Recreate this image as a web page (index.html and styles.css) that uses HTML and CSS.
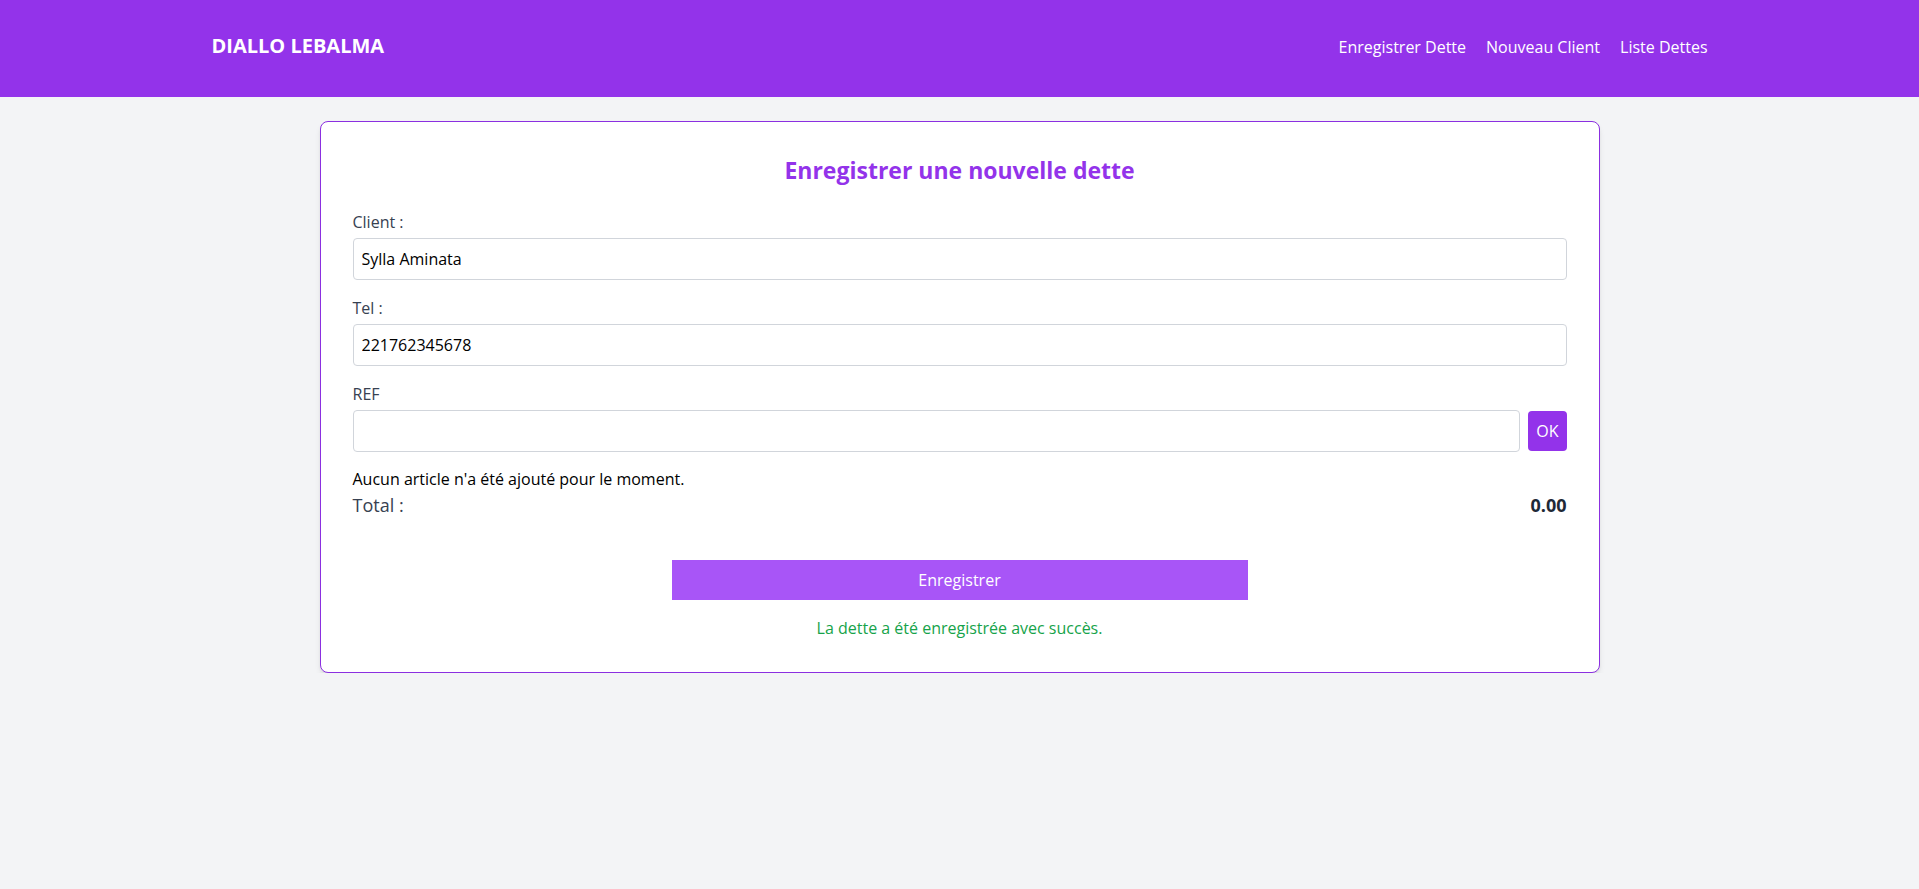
FILE: index.html
```html
<!DOCTYPE html>
<html lang="fr">
<head>
<meta charset="utf-8">
<title>Enregistrer une nouvelle dette</title>
<link rel="stylesheet" href="styles.css">
</head>
<body>
<header class="topbar">
  <div class="topbar-inner">
    <div class="brand">DIALLO LEBALMA</div>
    <nav class="nav">
      <a href="#" class="nav-link">Enregistrer Dette</a>
      <a href="#" class="nav-link">Nouveau Client</a>
      <a href="#" class="nav-link">Liste Dettes</a>
    </nav>
  </div>
</header>
<main class="card">
  <h2 class="card-title">Enregistrer une nouvelle dette</h2>
  <div class="field">
    <label class="label">Client :</label>
    <input class="input" type="text" value="Sylla Aminata">
  </div>
  <div class="field">
    <label class="label">Tel :</label>
    <input class="input" type="text" value="221762345678">
  </div>
  <div class="field field-ref">
    <label class="label">REF</label>
    <div class="ref-row">
      <input class="input ref-input" type="text" value="">
      <button class="ok-btn" type="button">OK</button>
    </div>
  </div>
  <p class="empty">Aucun article n'a été ajouté pour le moment.</p>
  <div class="total-row">
    <span class="total-label">Total :</span>
    <span class="total-value">0.00</span>
  </div>
  <button class="submit-btn" type="button">Enregistrer</button>
  <p class="success">La dette a été enregistrée avec succès.</p>
</main>
</body>
</html>
```
FILE: styles.css
```css
html, body {
  margin: 0;
  padding: 0;
}
body {
  background: #f3f4f6;
  font-family: "Open Sans", "Noto Sans", sans-serif;
  font-size: 16px;
  line-height: 24px;
  color: #000;
}
.topbar {
  background: #9333ea;
  height: 97px;
  box-sizing: border-box;
  padding-top: 32px;
}
.topbar-inner {
  box-sizing: border-box;
  max-width: 1536px;
  margin: 0 auto;
  padding: 0 20px;
  display: flex;
  align-items: center;
  justify-content: space-between;
  height: 28px;
}
.brand {
  color: #fff;
  font-weight: 700;
  font-size: 20px;
  line-height: 28px;
}
.nav {
  display: flex;
  gap: 20px;
  margin-top: 2px;
}
.nav-link {
  color: #fff;
  text-decoration: none;
  font-size: 16px;
  line-height: 24px;
}
.card {
  display: block;
  box-sizing: border-box;
  width: 1280px;
  margin: 24px auto 0;
  background: #fff;
  border: 1px solid #8b2fe0;
  border-radius: 8px;
  padding: 32px;
  box-shadow: 0 4px 6px -1px rgba(0,0,0,0.1), 0 2px 4px -2px rgba(0,0,0,0.1);
}
.card-title {
  margin: 0 0 24px;
  text-align: center;
  font-size: 23px;
  line-height: 32px;
  font-weight: 700;
  color: #9333ea;
}
.field {
  margin-bottom: 16px;
}
.field-ref {
  margin-bottom: 15px;
}
.label {
  display: block;
  color: #374151;
  font-size: 16px;
  line-height: 24px;
  margin-bottom: 4px;
}
.input {
  display: block;
  width: 100%;
  box-sizing: border-box;
  height: 42px;
  padding: 0 8px;
  border: 1px solid #d1d5db;
  border-radius: 4px;
  font-family: "Open Sans", "Noto Sans", sans-serif;
  font-size: 16px;
  color: #000;
  background: #fff;
  outline: none;
}
.ref-row {
  display: flex;
  align-items: center;
  gap: 8px;
}
.ref-input {
  flex: 1;
  width: auto;
}
.ok-btn {
  background: #9333ea;
  color: #fff;
  border: none;
  border-radius: 4px;
  padding: 8px;
  font-family: "Open Sans", "Noto Sans", sans-serif;
  font-size: 16px;
  line-height: 24px;
  height: 40px;
}
.empty {
  margin: 0;
  color: #000;
  font-size: 16px;
  line-height: 24px;
}
.total-row {
  display: flex;
  justify-content: space-between;
  font-size: 18px;
  line-height: 28px;
}
.total-label {
  color: #374151;
}
.total-value {
  color: #1f2937;
  font-weight: 700;
}
.submit-btn {
  display: block;
  width: 576px;
  height: 40px;
  margin: 41px auto 0;
  background: #a855f7;
  color: #fff;
  border: none;
  border-radius: 0;
  font-family: "Open Sans", "Noto Sans", sans-serif;
  font-size: 16px;
}
.success {
  margin: 16px 0 0;
  text-align: center;
  color: #16a34a;
  font-size: 16px;
  line-height: 24px;
}
```
